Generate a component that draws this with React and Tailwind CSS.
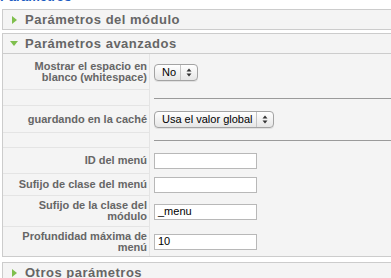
const labelCls =
  "w-[147px] shrink-0 border-r border-b border-[#e4e4e4] pr-[2px] flex items-center justify-end text-right text-[11px] leading-[11px] font-bold text-[#666]";

function Arrows() {
  return (
    <svg width="6" height="9" viewBox="0 0 6 9">
      <path d="M3 0.5 L5.5 3.5 H0.5 Z" fill="#333" />
      <path d="M3 8.5 L5.5 5.5 H0.5 Z" fill="#333" />
    </svg>
  );
}

function Select({ value, width }) {
  return (
    <div
      className={`${width} h-[17px] flex items-stretch rounded-[4px] border border-[#a3a3a3] bg-gradient-to-b from-white to-[#e6e6e6] text-[11px] text-black shadow-[0_1px_0_rgba(0,0,0,0.08)]`}
    >
      <div className="flex-1 flex items-center pl-[7px]">{value}</div>
      <div className="w-[17px] border-l border-[#c4c4c4] flex items-center justify-center">
        <Arrows />
      </div>
    </div>
  );
}

function Field({ value }) {
  return (
    <div className="w-[103px] h-[16px] border border-[#b8b8b8] bg-white pl-[3px] flex items-center text-[11px] text-black">
      {value}
    </div>
  );
}

function Row({ h, label, last, children }) {
  return (
    <div className={`flex ${h}`}>
      <div className={`${labelCls} ${last ? "border-b-0" : ""}`}>
        {label && <span>{label}</span>}
      </div>
      <div className="flex-1 flex items-center pl-[4px]">{children}</div>
    </div>
  );
}

function Toggler({ title, open }) {
  return (
    <div className="h-[19px] flex items-center gap-[0px] text-[13px] tracking-[0.5px] font-bold text-[#666]">
      <div className="w-[22px] flex justify-center">
        {open ? (
          <svg width="8" height="5" viewBox="0 0 8 5">
            <path d="M0 0 H8 L4 5 Z" fill="#7fbf4d" />
          </svg>
        ) : (
          <svg width="5" height="8" viewBox="0 0 5 8">
            <path d="M0 0 L5 4 L0 8 Z" fill="#7fbf4d" />
          </svg>
        )}
      </div>
      <span>{title}</span>
    </div>
  );
}

export default function App() {
  return (
    <div className="w-[391px] h-[278px] overflow-hidden bg-white font-['Liberation_Sans',Arial,sans-serif]">
      <div className="h-[3px] overflow-hidden">
        <div className="-mt-[11px] text-[13px] leading-[16px] font-bold text-[#1b5cc2]">
          Parámetros
        </div>
      </div>

      <div className="mt-[6px] ml-[2px] w-[420px] border border-[#cccccc] bg-[#f4f4f4]">
        <Toggler title="Parámetros del módulo" />
      </div>

      <div className="mt-[3px] ml-[2px] w-[420px] border border-[#cccccc] bg-[#f4f4f4]">
        <div className="border-b border-[#cccccc]">
          <Toggler title="Parámetros avanzados" open />
        </div>
        <Row h="h-[36px]" label={<>Mostrar el espacio en<br />blanco (whitespace)</>}>
          <Select value="No" width="w-[44px]" />
        </Row>
        <Row h="h-[16px]">
          <div className="w-full border-t border-[#9a9a9a]" />
        </Row>
        <Row h="h-[27px]" label="guardando en la caché">
          <Select value="Usa el valor global" width="w-[120px]" />
        </Row>
        <Row h="h-[15px]">
          <div className="w-full border-t border-[#9a9a9a]" />
        </Row>
        <Row h="h-[26px]" label="ID del menú">
          <Field value="" />
        </Row>
        <Row h="h-[22px]" label="Sufijo de clase del menú">
          <Field value="" />
        </Row>
        <Row h="h-[31px]" label={<>Sufijo de la clase del<br />módulo</>}>
          <Field value="_menu" />
        </Row>
        <Row h="h-[29px]" last label={<>Profundidad máxima de<br />menú</>}>
          <Field value="10" />
        </Row>
      </div>

      <div className="mt-[5px] ml-[2px] w-[420px] border border-[#cccccc] bg-[#f4f4f4]">
        <Toggler title="Otros parámetros" />
      </div>
    </div>
  );
}
